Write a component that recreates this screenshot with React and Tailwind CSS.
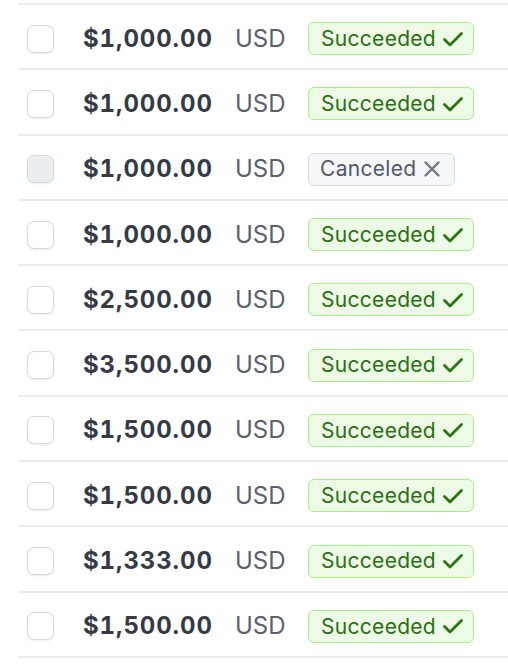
const payments = [
  { amount: "$1,000.00", status: "succeeded" },
  { amount: "$1,000.00", status: "succeeded" },
  { amount: "$1,000.00", status: "canceled" },
  { amount: "$1,000.00", status: "succeeded" },
  { amount: "$2,500.00", status: "succeeded" },
  { amount: "$3,500.00", status: "succeeded" },
  { amount: "$1,500.00", status: "succeeded" },
  { amount: "$1,500.00", status: "succeeded" },
  { amount: "$1,333.00", status: "succeeded" },
  { amount: "$1,500.00", status: "succeeded" },
];

function CheckIcon() {
  return (
    <svg width="24" height="24" viewBox="0 0 24 24" fill="none" className="ml-[5px]">
      <path d="M3.5 12.5l5.5 5.5L20.5 6.5" stroke="#2b7510" strokeWidth="2.8" strokeLinecap="round" strokeLinejoin="round" />
    </svg>
  );
}

function XIcon() {
  return (
    <svg width="20" height="20" viewBox="0 0 20 20" fill="none" className="ml-[6px]">
      <path d="M3.5 3.5l13 13M16.5 3.5l-13 13" stroke="#6c7688" strokeWidth="2.4" strokeLinecap="round" />
    </svg>
  );
}

function Badge({ status }) {
  if (status === "canceled") {
    return (
      <span className="inline-flex items-center h-[33px] pl-[11px] pr-[12px] rounded-[6px] border border-[#d5dbe1] bg-[#f5f6f8] text-[#545969] text-[21px] tracking-[0.3px]">
        Canceled
        <XIcon />
      </span>
    );
  }
  return (
    <span className="inline-flex items-center h-[33px] pl-[12px] pr-[8px] rounded-[6px] border border-[#a8ee86] bg-[#edfbe6] text-[#2a6f12] text-[21px] tracking-[0.3px]">
      Succeeded
      <CheckIcon />
    </span>
  );
}

export default function App() {
  return (
    <div className="w-[508px] h-[664px] bg-white overflow-hidden pt-[3px] font-['Inter',sans-serif]">
      <div className="ml-[18px] border-t-2 border-[#ececf0]">
        {payments.map((p, i) => (
          <div key={i} className="flex items-center h-[65.3px] border-b-2 border-[#ececf0] pt-[4px]">
            <div
              className={`ml-[9px] w-[27px] h-[28px] rounded-[7px] border border-[#d3d8df] shadow-[0_1px_2px_rgba(0,0,0,0.08)] ${
                p.status === "canceled" ? "bg-[#ebeef1]" : "bg-white"
              }`}
            />
            <span className="ml-[29px] w-[152px] text-[24px] font-bold text-[#353a44] tabular-nums tracking-[0.9px]">
              {p.amount}
            </span>
            <span className="w-[73px] text-[24px] text-[#596171]">USD</span>
            <Badge status={p.status} />
          </div>
        ))}
      </div>
    </div>
  );
}
